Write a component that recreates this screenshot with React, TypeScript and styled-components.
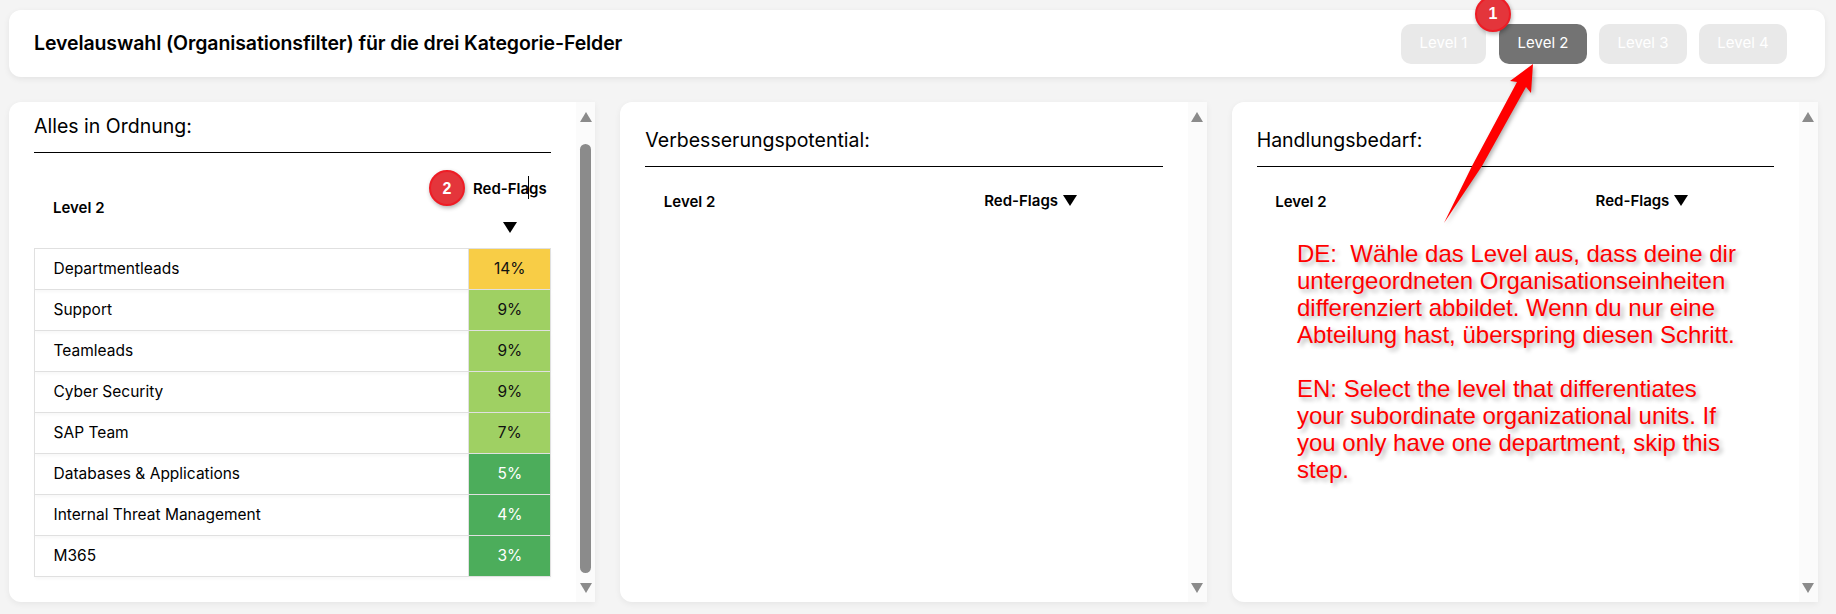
import styled, { createGlobalStyle } from "styled-components";

interface Row {
  name: string
  value: string
  tone: "warn" | "ok" | "good"
}

const rows: Row[] = [
  { name: "Departmentleads", value: "14%", tone: "warn" },
  { name: "Support", value: "9%", tone: "ok" },
  { name: "Teamleads", value: "9%", tone: "ok" },
  { name: "Cyber Security", value: "9%", tone: "ok" },
  { name: "SAP Team", value: "7%", tone: "ok" },
  { name: "Databases & Applications", value: "5%", tone: "good" },
  { name: "Internal Threat Management", value: "4%", tone: "good" },
  { name: "M365", value: "3%", tone: "good" },
];

const toneColors = { warn: "#f8cd46", ok: "#9fd063", good: "#4cad5b" };

const GlobalStyle = createGlobalStyle`
  body {
    margin: 0;
    background-color: #f4f4f4;
    font-family: Inter, "Liberation Sans", sans-serif;
    color: #000;
  }
`

const Page = styled.div`
  position: relative;
  height: 614px;
  box-sizing: border-box;
  padding: 10px 11px 0 9px;
  overflow: hidden;
`
const TopCard = styled.header`
  height: 67px;
  background-color: #fff;
  border-radius: 12px;
  box-shadow: 0 2px 6px rgba(0, 0, 0, 0.07);
  display: flex;
  align-items: center;
  justify-content: space-between;
  padding: 0 38px 0 25px;
`
const Title = styled.h1`
  margin: 0 0 2px;
  font-size: 19.5px;
  font-weight: 600;
  letter-spacing: -0.1px;
`
const Levels = styled.div`
  position: relative;
  display: flex;
  gap: 12px;
`
const LevelButton = styled.button<{ $active?: boolean; $narrow?: boolean }>`
  width: ${({ $narrow }) => ($narrow ? 85 : 88)}px;
  height: 40px;
  margin-left: ${({ $active }) => ($active ? 1 : 0)}px;
  padding: 0 0 2px;
  border: none;
  border-radius: 10px;
  background-color: ${({ $active }) => ($active ? "#737373" : "#e9e9e9")};
  color: #fff;
  font-family: inherit;
  font-size: 15px;
`
const Badge = styled.span<{ $left: number; $top: number }>`
  position: absolute;
  left: ${({ $left }) => $left}px;
  top: ${({ $top }) => $top}px;
  width: 36px;
  height: 36px;
  box-sizing: border-box;
  border: 2px solid #ee1c25;
  border-radius: 50%;
  background-color: #e4353b;
  box-shadow: 1px 2px 4px rgba(0, 0, 0, 0.3);
  color: #fff;
  font-family: "Liberation Sans", sans-serif;
  font-size: 16px;
  font-weight: 700;
  display: flex;
  align-items: center;
  justify-content: center;
`
const Panels = styled.div`
  display: flex;
  gap: 25px;
  margin-top: 25px;
  margin-right: 7px;
`
const Panel = styled.section`
  flex: 1;
  height: 500px;
  display: flex;
  background-color: #fff;
  border-radius: 12px 0 0 12px;
  box-shadow: 0 2px 6px rgba(0, 0, 0, 0.06);
`
const PanelBody = styled.div<{ $scrolled?: boolean }>`
  flex: 1;
  min-width: 0;
  padding: ${({ $scrolled }) => ($scrolled ? 12 : 26)}px 25px 0;
`
const Heading = styled.h2`
  margin: 0;
  padding-bottom: 14px;
  border-bottom: 1px solid #000;
  font-size: 19.5px;
  line-height: 24px;
  font-weight: 400;
`
const Table = styled.table<{ $empty?: boolean }>`
  width: 100%;
  margin-top: ${({ $empty }) => ($empty ? 11.5 : 13)}px;
  border-collapse: collapse;
  table-layout: fixed;
`
const HeadCell = styled.th<{ $width?: number }>`
  position: relative;
  ${({ $width }) => ($width ? `width: ${$width}px;` : "")}
  padding: 13.5px 0 13.5px 18.5px;
  font-size: 15px;
  line-height: 17px;
  font-weight: 600;
  text-align: left;
`
const SortHead = styled(HeadCell)`
  padding: 13.5px 0 15.5px;
  text-align: center;
`
const SortLabel = styled.span`
  display: flex;
  flex-wrap: wrap;
  align-items: center;
  justify-content: center;
  column-gap: 5px;
  row-gap: 25px;
`
const SortArrow = styled.i`
  width: 0;
  height: 0;
  border-left: 7px solid transparent;
  border-right: 7px solid transparent;
  border-top: 11px solid #000;
`
const Caret = styled.span`
  position: absolute;
  left: 59px;
  top: 10px;
  width: 1px;
  height: 23px;
  background-color: #000;
`
const BodyRow = styled.tr`
  height: 41px;
  box-shadow: 0 2px 3px rgba(0, 0, 0, 0.03);
`
const NameCell = styled.td`
  padding: 0 0 2px 18.5px;
  border: 1px solid #e0e0e0;
  font-size: 15.5px;
`
const ValueCell = styled.td<{ $tone: Row["tone"] }>`
  padding: 0 0 2px;
  border: 1px solid #e0e0e0;
  background-color: ${({ $tone }) => toneColors[$tone]};
  color: ${({ $tone }) => ($tone === "good" ? "#fff" : "#111")};
  font-size: 15.5px;
  text-align: center;
`
const ScrollBar = styled.div`
  width: 19px;
  flex-shrink: 0;
  box-sizing: border-box;
  padding: 10px 0 9px;
  background-color: #fbfbfb;
  display: flex;
  flex-direction: column;
  align-items: center;
  justify-content: space-between;
`
const ScrollArrow = styled.i<{ $down?: boolean }>`
  width: 0;
  height: 0;
  border-left: 6.5px solid transparent;
  border-right: 6.5px solid transparent;
  ${({ $down }) => ($down ? "border-top" : "border-bottom")}: 10px solid #8b8b8b;
`
const ScrollThumb = styled.div`
  flex: 1;
  width: 11px;
  margin: 22px 0 10px;
  border-radius: 6px;
  background-color: #8b8b8b;
`
const Note = styled.div`
  position: absolute;
  left: 1297px;
  top: 240px;
  font-family: "Liberation Sans", Arial, sans-serif;
  font-size: 24px;
  line-height: 27px;
  white-space: pre;
  color: #f00;
  text-shadow: 3px 3px 4px rgba(0, 0, 0, 0.3);
`
const Pointer = styled.svg`
  position: absolute;
  left: 1440px;
  top: 60px;
  filter: drop-shadow(2px 2px 2px rgba(0, 0, 0, 0.3));
`

function ScrollTrack({ thumb }: { thumb?: boolean }) {
  return (
    <ScrollBar>
      <ScrollArrow />
      {thumb && <ScrollThumb />}
      <ScrollArrow $down />
    </ScrollBar>
  )
}

export default function App() {
  return (
    <Page>
      <GlobalStyle />
      <TopCard>
        <Title>Levelauswahl (Organisationsfilter) für die drei Kategorie-Felder</Title>
        <Levels>
          <LevelButton $narrow>Level 1</LevelButton>
          <LevelButton $active>Level 2</LevelButton>
          <LevelButton>Level 3</LevelButton>
          <LevelButton>Level 4</LevelButton>
          <Badge $left={74} $top={-28}>1</Badge>
        </Levels>
      </TopCard>
      <Panels>
        <Panel>
          <PanelBody $scrolled>
            <Heading>Alles in Ordnung:</Heading>
            <Table>
              <thead>
                <tr>
                  <HeadCell>Level 2</HeadCell>
                  <SortHead $width={82}>
                    <Badge $left={-40} $top={4}>2</Badge>
                    <SortLabel>Red-Flags <SortArrow /></SortLabel>
                    <Caret />
                  </SortHead>
                </tr>
              </thead>
              <tbody>
                {rows.map(row => (
                  <BodyRow key={row.name}>
                    <NameCell>{row.name}</NameCell>
                    <ValueCell $tone={row.tone}>{row.value}</ValueCell>
                  </BodyRow>
                ))}
              </tbody>
            </Table>
          </PanelBody>
          <ScrollTrack thumb />
        </Panel>
        <Panel>
          <PanelBody>
            <Heading>Verbesserungspotential:</Heading>
            <Table $empty>
              <thead>
                <tr>
                  <HeadCell>Level 2</HeadCell>
                  <SortHead $width={264}>
                    <SortLabel>Red-Flags <SortArrow /></SortLabel>
                  </SortHead>
                </tr>
              </thead>
            </Table>
          </PanelBody>
          <ScrollTrack />
        </Panel>
        <Panel>
          <PanelBody>
            <Heading>Handlungsbedarf:</Heading>
            <Table $empty>
              <thead>
                <tr>
                  <HeadCell>Level 2</HeadCell>
                  <SortHead $width={264}>
                    <SortLabel>Red-Flags <SortArrow /></SortLabel>
                  </SortHead>
                </tr>
              </thead>
            </Table>
          </PanelBody>
          <ScrollTrack />
        </Panel>
      </Panels>
      <Pointer width="100" height="165" viewBox="0 0 100 165">
        <path d="M93 4 L91 33 L86 27 L42 106 L4 163 L32 106 L77 22 L70 21 Z" fill="#f00" />
      </Pointer>
      <Note>
        {"DE:  Wähle das Level aus, dass deine dir\nuntergeordneten Organisationseinheiten\ndifferenziert abbildet. Wenn du nur eine\nAbteilung hast, überspring diesen Schritt.\n\nEN: Select the level that differentiates\nyour subordinate organizational units. If\nyou only have one department, skip this\nstep."}
      </Note>
    </Page>
  )
}
